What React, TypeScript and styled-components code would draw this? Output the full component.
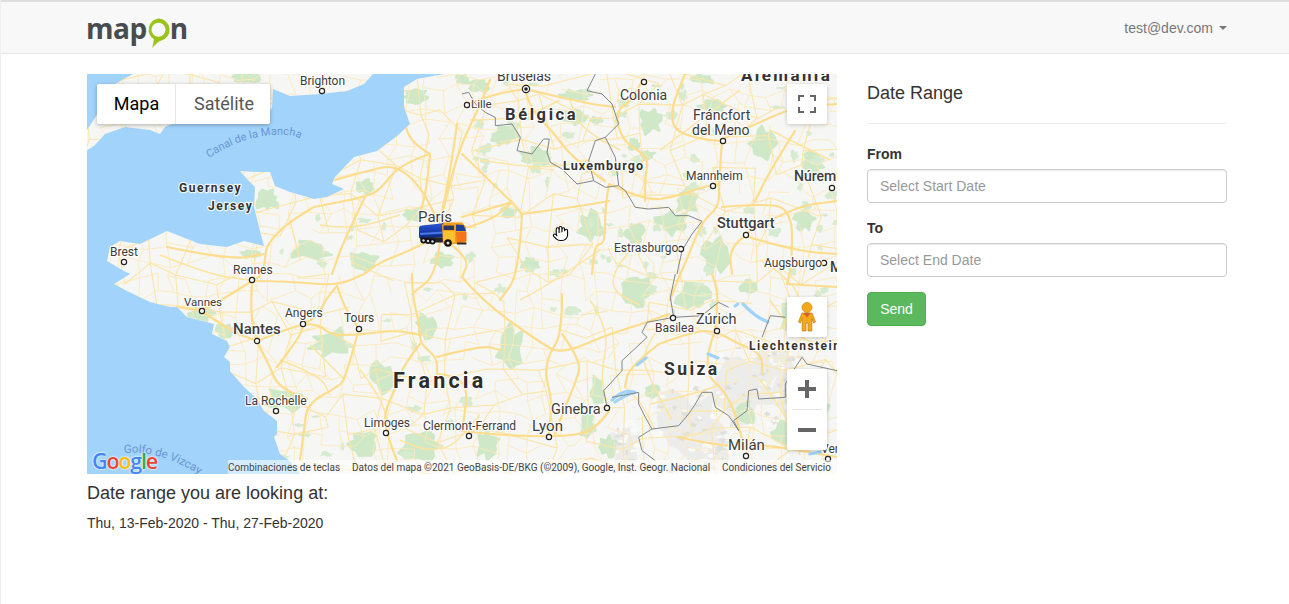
import React, { useMemo } from "react";
import styled, { createGlobalStyle } from "styled-components";
import { Hand } from "lucide-react";

type Pt = [number, number];

const GlobalStyle = createGlobalStyle`
  html, body { margin: 0; padding: 0; background: #fff; }
  body { font-family: "Liberation Sans", Arial, sans-serif; font-size: 14px; line-height: 20px; color: #333; }
  * { box-sizing: border-box; }
`;

const Page = styled.div`
  min-height: 604px;
  border-left: 1px solid #eeeeee;
`;
const Navbar = styled.header`
  height: 54px;
  background: #f8f8f8;
  border-top: 2px solid #dedede;
  border-bottom: 1px solid #e7e7e7;
  display: flex;
  align-items: center;
  justify-content: space-between;
  padding: 0 62px 0 85px;
`;
const Logo = styled.div`
  display: flex;
  align-items: flex-start;
  height: 36px;
  font-family: "Open Sans", sans-serif;
  font-weight: 700;
  font-size: 28px;
  line-height: 36px;
  letter-spacing: -0.5px;
  color: #484c4f;
`;
const LogoMark = styled.svg`
  width: 25px;
  height: 36px;
  margin: 5px -1px 0 -1px;
  flex: none;
`;
const UserMenu = styled.div`
  display: flex;
  align-items: center;
  gap: 5px;
  color: #777;
  font-size: 14px;
`;
const Caret = styled.span`
  width: 0;
  height: 0;
  border-top: 4px solid #777;
  border-left: 4px solid transparent;
  border-right: 4px solid transparent;
  margin-left: 1px;
`;
const Main = styled.main`
  display: grid;
  grid-template-columns: 750px 360px;
  column-gap: 30px;
  padding: 20px 62px 0 86px;
`;
const MapFrame = styled.div`
  position: relative;
  width: 750px;
  height: 400px;
  overflow: hidden;
  background: #a2d4fb;
`;
const MapDrawing = styled.svg`
  display: block;
  width: 750px;
  height: 400px;
  font-family: Roboto, sans-serif;
`;
const Label = styled.text<{ $weight?: number; $spacing?: number; $color?: string; $halo?: boolean }>`
  font-weight: ${(p) => p.$weight ?? 400};
  letter-spacing: ${(p) => p.$spacing ?? 0}px;
  fill: ${(p) => p.$color ?? "#3c3c3c"};
  stroke: ${(p) => (p.$halo === false ? "none" : "rgba(255,255,255,.85)")};
  stroke-width: 2.4px;
  paint-order: stroke;
  stroke-linejoin: round;
`;
const MapTypeBar = styled.div`
  position: absolute;
  left: 10px;
  top: 10px;
  display: flex;
  height: 40px;
  background: #fff;
  box-shadow: 0 1px 4px rgba(0, 0, 0, 0.3);
  border-radius: 2px;
  font-family: Roboto, sans-serif;
  font-size: 18px;
`;
const MapTypeButton = styled.div<{ $active?: boolean; $w: number }>`
  width: ${(p) => p.$w}px;
  padding-left: ${(p) => (p.$active ? 1 : 2)}px;
  display: flex;
  align-items: center;
  justify-content: center;
  color: ${(p) => (p.$active ? "#000" : "#565656")};
  border-right: ${(p) => (p.$active ? "1px solid #e6e6e6" : "none")};
`;
const ControlBox = styled.div<{ $top: number; $h?: number }>`
  position: absolute;
  left: 700px;
  top: ${(p) => p.$top}px;
  width: 40px;
  height: ${(p) => p.$h ?? 40}px;
  background: #fff;
  border-radius: 2px;
  box-shadow: 0 1px 4px rgba(0, 0, 0, 0.2);
  display: flex;
  flex-direction: column;
  align-items: center;
  justify-content: center;
`;
const ZoomButton = styled.div`
  height: 40px;
  width: 40px;
  display: flex;
  align-items: center;
  justify-content: center;
`;
const ZoomDivider = styled.div`
  height: 1px;
  width: 30px;
  background: #e6e6e6;
`;
const Attribution = styled.div`
  position: absolute;
  right: 0;
  bottom: 0;
  left: 141px;
  height: 14px;
  padding-top: 2px;
  background: rgba(255, 255, 255, 0.55);
  font-family: Roboto, sans-serif;
  font-size: 10px;
  line-height: 12px;
  color: #444;
  white-space: nowrap;
  display: flex;
`;
const AttrItem = styled.span<{ $w: number }>`
  display: block;
  width: ${(p) => p.$w}px;
`;
const GoogleMark = styled.div`
  position: absolute;
  left: 5px;
  bottom: 0;
  height: 26px;
  font-family: "Open Sans", sans-serif;
  font-size: 21.5px;
  line-height: 26px;
  font-weight: 600;
  letter-spacing: -1.2px;
  text-shadow: 0 0 2px rgba(255, 255, 255, 0.95), 0 0 2px rgba(255, 255, 255, 0.95);
`;
const GoogleLetter = styled.span<{ $c: string }>`
  color: ${(p) => p.$c};
`;
const TruckMarker = styled.svg`
  position: absolute;
  left: 332px;
  top: 148px;
  width: 48px;
  height: 25px;
`;
const CursorHand = styled(Hand)`
  position: absolute;
  left: 465px;
  top: 151px;
  width: 17px;
  height: 17px;
  fill: #fff;
  color: #000;
`;
const Side = styled.aside`
  padding-top: 9px;
`;
const SideTitle = styled.h2`
  margin: 0 0 20px;
  padding-bottom: 20px;
  border-bottom: 1px solid #eee;
  font-size: 18px;
  font-weight: 400;
  line-height: 20px;
  color: #333;
`;
const Field = styled.div`
  margin-bottom: 15px;
`;
const FieldLabel = styled.label`
  display: block;
  margin-bottom: 5px;
  font-weight: 700;
  font-size: 14px;
  line-height: 20px;
`;
const TextInput = styled.input`
  display: block;
  width: 100%;
  height: 34px;
  padding: 6px 12px;
  border: 1px solid #ccc;
  border-radius: 4px;
  font: 14px/20px "Liberation Sans", Arial, sans-serif;
  color: #555;
  background: #fff;
  box-shadow: inset 0 1px 1px rgba(0, 0, 0, 0.075);
  &::placeholder { color: #999; opacity: 1; }
`;
const SendButton = styled.button`
  display: block;
  width: 59px;
  height: 34px;
  padding: 0;
  border: 1px solid #4cae4c;
  border-radius: 4px;
  background: #5cb85c;
  color: #fff;
  font: 14px/20px "Liberation Sans", Arial, sans-serif;
`;
const Summary = styled.section`
  grid-column: 1;
  grid-row: 2;
  padding-top: 9px;
`;
const SummaryTitle = styled.h3`
  margin: 0 0 10px;
  font-size: 18px;
  font-weight: 400;
  line-height: 20px;
  color: #333;
`;
const SummaryText = styled.p`
  margin: 0;
  font-size: 14px;
  line-height: 20px;
  color: #333;
`;

/* ------- map data (page coordinates: svg viewBox starts at 87,74) ------- */
const UK: Pt[] = [[133,74],[373,74],[364,84],[347,91],[320,94],[290,96],[273,89],[272,108],[262,118],[185,118],[165,127],[160,134],[150,130],[125,127],[105,134],[94,146],[87,150],[87,130],[100,110],[115,84]];
const FRANCE: Pt[] = [[444,74],[417,79],[404,87],[404,107],[410,124],[397,136],[377,151],[354,157],[335,177],[332,184],[344,189],[327,197],[314,199],[290,192],[275,186],[270,172],[257,172],[240,171],[247,179],[255,187],[254,207],[260,231],[264,246],[244,241],[227,247],[200,244],[167,231],[140,244],[120,241],[110,247],[107,261],[124,271],[130,274],[114,284],[127,291],[150,302],[170,307],[177,307],[187,317],[214,324],[212,334],[227,341],[230,347],[224,357],[230,362],[230,371],[244,387],[257,399],[264,411],[277,421],[277,434],[274,437],[280,454],[290,461],[300,474],[837,474],[837,74]];

const MAJOR: Pt[][] = [
  [[440,225],[450,180],[463,140],[478,110],[490,80]],
  [[335,180],[370,170],[395,165],[420,185],[440,225]],
  [[314,207],[267,234],[264,274],[252,281]],
  [[252,281],[287,281],[337,286],[364,274]],
  [[257,341],[285,330],[303,324],[320,325],[330,335],[359,335],[395,330],[420,335]],
  [[337,286],[327,297],[317,317],[303,324]],
  [[337,286],[344,307],[359,329]],
  [[359,329],[354,347],[344,381],[337,387],[307,404],[304,431],[300,460]],
  [[257,341],[270,367],[277,384],[294,394],[307,399]],
  [[277,367],[300,337],[303,324]],
  [[412,274],[412,294],[420,327],[420,344],[437,357],[437,374]],
  [[420,344],[404,364],[394,391],[384,414],[387,434],[397,461]],
  [[562,294],[562,334],[549,354],[545,374],[552,400],[549,434]],
  [[462,277],[482,301],[542,344],[562,354],[609,334],[642,324],[669,314]],
  [[562,334],[582,361],[575,384],[565,407],[555,434]],
  [[609,411],[595,431],[562,437],[500,435],[462,431]],
  [[659,344],[629,367],[625,387]],
  [[659,344],[695,331],[715,331],[739,344],[762,354],[762,374]],
  [[712,274],[719,290],[715,331]],
  [[678,437],[722,447],[762,444],[837,457]],
  [[787,284],[837,287]],
  [[722,141],[719,184],[719,207],[702,221],[685,264],[680,274],[670,300]],
  [[609,184],[605,207],[605,244],[595,244],[592,274]],
  [[522,214],[575,207],[609,201]],
  [[522,214],[519,274],[500,300]],
  [[462,154],[512,202],[522,214]],
  [[462,217],[512,202]],
  [[609,184],[645,201],[675,197],[702,187],[719,184]],
  [[642,81],[632,101],[615,111],[622,141],[649,157],[645,177],[645,201]],
  [[525,89],[529,107],[552,131],[572,157],[605,181]],
  [[525,89],[589,104],[615,107]],
  [[467,104],[495,94],[525,89]],
  [[719,141],[762,121],[795,107],[837,104]],
  [[719,141],[679,137],[669,114],[685,74]],
  [[745,234],[792,207],[837,201]],
  [[722,207],[755,204],[792,207],[792,264],[787,284]],
  [[745,236],[795,251],[837,254]],
  [[745,236],[729,247],[732,274]],
  [[795,131],[772,167],[755,201]],
  [[430,154],[427,187],[420,214]],
  [[430,154],[407,141],[404,107]],
  [[430,154],[400,164],[380,190],[365,197],[314,207]],
  [[365,197],[344,240],[332,274]],
  [[457,124],[450,174],[440,220]],
  [[440,235],[412,250],[380,262],[364,274]],
  [[445,240],[470,258],[462,277]],
  [[450,232],[490,222],[512,202]],
  [[440,240],[437,274],[412,294]],
  [[167,247],[230,260],[264,254]],
  [[252,281],[250,314],[257,341]],
  [[252,281],[220,301],[202,311],[177,307]],
  [[202,311],[230,331],[257,341]],
  [[715,331],[700,370],[730,395],[745,450]],
  [[437,374],[470,375],[462,431]],
  [[437,357],[482,345],[500,350]],
];
const SECONDARY: Pt[][] = [
  [[640,240],[618,262],[610,290],[640,305]],
  [[590,300],[610,330],[600,375],[609,411]],
  [[669,314],[640,350],[650,380],[672,420]],
  [[650,404],[690,395],[720,385]],
  [[625,387],[640,400],[655,430]],
  [[470,120],[520,120],[560,100]],
  [[620,150],[580,130],[570,100]],
  [[480,160],[540,170],[590,160]],
  [[660,150],[700,120],[740,90]],
  [[770,130],[830,160]],
  [[760,260],[810,290],[780,330]],
  [[400,440],[440,460],[480,415]],
  [[520,300],[540,290],[600,250]],
  [[320,225],[350,230],[400,215]],
  [[290,220],[300,260]],
  [[160,255],[210,275],[250,280]],
  [[310,345],[345,380]],
  [[280,360],[320,375],[330,395]],
  [[360,370],[380,395],[390,430]],
  [[770,300],[800,345],[835,340]],
  [[760,380],[790,420],[800,455]],
];
const GREEN: number[][] = [
  [404,90,428,104],[255,190,280,210],[357,178,374,194],[287,241,330,260],[347,250,377,274],[404,208,424,222],[430,253,453,267],
  [500,207,517,217],[520,257,540,272],[577,211,605,241],[490,127,517,147],[522,147,555,167],[655,211,689,234],[625,224,645,244],
  [675,187,699,214],[702,234,729,274],[749,127,775,160],[692,74,715,84],[590,117,602,124],[629,137,639,151],[639,107,662,134],
  [795,207,815,230],[215,324,237,337],[310,327,354,357],[370,362,394,394],[264,386,304,411],[350,431,380,457],[400,431,440,461],
  [415,314,435,341],[190,307,214,321],[495,324,527,371],[475,431,499,459],[579,414,595,437],[675,284,712,311],[622,274,652,307],
  [589,377,605,407],[645,384,659,397],[599,437,619,457],[560,108,590,125],[470,80,490,92],[560,90,590,100],[800,150,825,175],
  [780,300,800,330],[770,420,800,445],[735,400,755,425],[810,395,830,430],[640,150,655,160],[700,100,725,112],[240,250,262,258],
  [740,280,760,296],[380,80,400,90],[230,74,265,82],[455,74,470,84],
];
const ALPS: number[][] = [[650,385,720,470],[715,345,785,425],[770,350,800,420],[700,430,730,470],[610,420,640,470]];
const BORDERS: { o: Pt; pts: number[] }[] = [
  { o: [462,74], pts: [0,60,20,55,40,90,70,115,100,130,100,155,150,150,175,190,165,230,210,240,245,195,262,195,255,235,265,265,300,285,345,330,395,320,430,340,470,335,490,350,520,400,560,405,620,400,640,425,680,425,720,442,690,480,660,530,645,600] },
  { o: [462,74], pts: [395,320,380,260,400,200,430,190,470,150,450,90,420,60,375,50,400,0] },
  { o: [462,74], pts: [430,190,460,250,470,335] },
  { o: [462,274], pts: [640,0,625,70,635,130,555,145,540,175,555,190,480,260,480,290,425,350,435,400] },
  { o: [462,274], pts: [450,370,530,355,530,390,550,430,570,465,650,455,680,420,700,390,720,355,750,355,760,400,800,425,830,470,815,440,855,410,860,350,885,345,890,375,970,370,970,330,1000,280,1020,250,1035,270,1125,290] },
  { o: [462,274], pts: [635,130,720,125,750,100,770,85,800,100] },
  { o: [462,274], pts: [900,190,925,125,970,130] },
  { o: [462,274], pts: [570,465,530,490,540,530,580,560] },
];
const LAKES: Pt[][] = [
  [[612,400],[622,391],[638,392],[628,394],[615,402]],
  [[637,365],[646,358]],
  [[743,304],[755,316],[768,322]],
  [[708,354],[718,358]],
  [[810,454],[820,452]],
  [[735,306],[738,304]],
];
const DOTS: Pt[] = [[322,91],[644,82],[467,105],[723,141],[713,186],[832,188],[746,235],[681,249],[824,263],[124,262],[252,280],[202,311],[257,341],[303,324],[359,329],[276,411],[386,433],[469,436],[549,437],[607,408],[673,318],[717,331],[746,456],[828,459]];

type L = { t: string; x: number; y: number; s: number; w?: number; sp?: number; c?: string };
const LABELS: L[] = [
  { t: "Bruselas", x: 497, y: 81, s: 14 },
  { t: "Brighton", x: 300, y: 85, s: 12 },
  { t: "Alemania", x: 741, y: 81, s: 17, w: 700, sp: 2.4, c: "#333" },
  { t: "Colonia", x: 620, y: 100, s: 14 },
  { t: "Lille", x: 471, y: 108, s: 11.5 },
  { t: "Bélgica", x: 505, y: 120, s: 16.5, w: 700, sp: 2.6, c: "#333" },
  { t: "Fráncfort", x: 693, y: 120, s: 14 },
  { t: "del Meno", x: 692, y: 135, s: 14 },
  { t: "Luxemburgo", x: 563, y: 170, s: 12.5, w: 700, sp: 1.1, c: "#333" },
  { t: "Mannheim", x: 686, y: 180, s: 12 },
  { t: "Núremberg", x: 794, y: 181, s: 14, w: 500 },
  { t: "Stuttgart", x: 717, y: 228, s: 14.5, w: 500 },
  { t: "Estrasburgo", x: 614, y: 252, s: 12 },
  { t: "Augsburgo", x: 764, y: 267, s: 12 },
  { t: "Múnich", x: 830, y: 272, s: 14, w: 500 },
  { t: "Guernsey", x: 179, y: 192, s: 12, w: 700, sp: 1.5, c: "#333" },
  { t: "Jersey", x: 208, y: 210, s: 12, w: 700, sp: 1.5, c: "#333" },
  { t: "Brest", x: 110, y: 256, s: 12 },
  { t: "París", x: 418, y: 222, s: 15 },
  { t: "Rennes", x: 233, y: 274, s: 12 },
  { t: "Vannes", x: 184, y: 306, s: 11.5 },
  { t: "Angers", x: 285, y: 317, s: 12 },
  { t: "Nantes", x: 233, y: 334, s: 15, w: 500 },
  { t: "Tours", x: 344, y: 322, s: 12 },
  { t: "La Rochelle", x: 245, y: 405, s: 12 },
  { t: "Limoges", x: 364, y: 427, s: 12 },
  { t: "Clermont-Ferrand", x: 423, y: 430, s: 12 },
  { t: "Francia", x: 393, y: 388, s: 21.5, w: 700, sp: 3.2, c: "#2b2b2b" },
  { t: "Ginebra", x: 551, y: 414, s: 14.5 },
  { t: "Lyon", x: 532, y: 431, s: 15 },
  { t: "Milán", x: 728, y: 450, s: 15 },
  { t: "Suiza", x: 664, y: 375, s: 17.5, w: 700, sp: 2.4, c: "#333" },
  { t: "Basilea", x: 655, y: 332, s: 12 },
  { t: "Zúrich", x: 696, y: 324, s: 14.5 },
  { t: "Liechtenstein", x: 749, y: 350, s: 12, w: 700, sp: 1.5, c: "#333" },
  { t: "Verona", x: 821, y: 453, s: 12 },
];

function rng(seed: number) {
  return () => {
    seed = (seed + 0x6d2b79f5) | 0;
    let t = Math.imul(seed ^ (seed >>> 15), 1 | seed);
    t = (t + Math.imul(t ^ (t >>> 7), 61 | t)) ^ t;
    return ((t ^ (t >>> 14)) >>> 0) / 4294967296;
  };
}
const poly = (p: Pt[]) => p.map((q) => q.join(",")).join(" ");
function smooth(p: Pt[]) {
  let d = `M${p[0][0]} ${p[0][1]}`;
  for (let i = 1; i < p.length - 1; i++) {
    const mx = (p[i][0] + p[i + 1][0]) / 2;
    const my = (p[i][1] + p[i + 1][1]) / 2;
    d += `Q${p[i][0]} ${p[i][1]} ${mx} ${my}`;
  }
  const l = p[p.length - 1];
  return d + `L${l[0]} ${l[1]}`;
}
function blob(b: number[], r: () => number) {
  const cx = (b[0] + b[2]) / 2, cy = (b[1] + b[3]) / 2;
  const rx = (b[2] - b[0]) / 2, ry = (b[3] - b[1]) / 2;
  const pts: Pt[] = [];
  const n = 16;
  for (let i = 0; i < n; i++) {
    const a = (i / n) * Math.PI * 2;
    const k = 0.5 + r() * 0.7;
    pts.push([+(cx + Math.cos(a) * rx * k).toFixed(1), +(cy + Math.sin(a) * ry * k).toFixed(1)]);
  }
  return poly(pts);
}
function mesh(seed: number, step: number) {
  const r = rng(seed);
  const nodes: Pt[][] = [];
  for (let j = 0; j * step < 420; j++) {
    const row: Pt[] = [];
    for (let i = 0; i * step < 770; i++) {
      row.push([87 + i * step + (r() - 0.5) * step * 0.8, 74 + j * step + (r() - 0.5) * step * 0.8]);
    }
    nodes.push(row);
  }
  let d = "";
  const seg = (a: Pt, b: Pt) => {
    d += `M${a[0].toFixed(1)} ${a[1].toFixed(1)}L${b[0].toFixed(1)} ${b[1].toFixed(1)}`;
  };
  nodes.forEach((row, j) =>
    row.forEach((n, i) => {
      if (row[i + 1] && r() < 0.72) seg(n, row[i + 1]);
      if (nodes[j + 1] && r() < 0.66) seg(n, nodes[j + 1][i]);
    })
  );
  return d;
}

function MapArt() {
  const art = useMemo(() => {
    const r = rng(42);
    const specks = Array.from({ length: 110 }, (_, i) => {
      const east = i < 85;
      const x = east ? 460 + r() * 377 : 250 + r() * 210;
      const y = east ? 74 + r() * 240 : 180 + r() * 290;
      return blob([x, y, x + 4 + r() * 12, y + 3 + r() * 10], r);
    });
    return {
      greens: GREEN.map((b) => blob(b, r)),
      specks,
      alps: ALPS.map((b) => blob(b, r)),
      rocks: Array.from({ length: 150 }, () => {
        const b = ALPS[Math.floor(r() * ALPS.length)];
        const x = b[0] + r() * (b[2] - b[0]);
        const y = b[1] + r() * (b[3] - b[1]);
        return blob([x, y, x + 3 + r() * 7, y + 2 + r() * 4], r);
      }),
      minor: mesh(7, 17),
      minor2: mesh(19, 33),
    };
  }, []);
  return (
    <MapDrawing viewBox="87 74 750 400">
      <defs>
        <clipPath id="land">
          <polygon points={poly(UK)} />
          <polygon points={poly(FRANCE)} />
        </clipPath>
        <path id="canal" d="M209 158Q236 140 264 136T302 140" fill="none" />
        <path id="golfo" d="M124 453Q160 450 198 474" fill="none" />
      </defs>
      <rect x="87" y="74" width="750" height="400" fill="#a2d4fb" />
      <polygon points={poly(UK)} fill="#f6f6f4" />
      <polygon points={poly(FRANCE)} fill="#f6f6f4" />
      <g clipPath="url(#land)">
        {art.alps.map((p, i) => <polygon key={i} points={p} fill="#ecedea" />)}
        {art.greens.map((p, i) => <polygon key={i} points={p} fill="#cfe8c7" strokeLinejoin="round" stroke="#cfe8c7" strokeWidth="2" />)}
        {art.specks.map((p, i) => <polygon key={i} points={p} fill="#d6ebcf" />)}
        {art.rocks.map((p, i) => <polygon key={i} points={p} fill={i % 2 ? "#dfdfdc" : "#fafaf8"} />)}
        <path d={art.minor} fill="none" stroke="#fceabc" strokeWidth="0.9" />
        <path d={art.minor2} fill="none" stroke="#fce5a8" strokeWidth="1.1" />
        {SECONDARY.map((p, i) => <path key={i} d={smooth(p)} fill="none" stroke="#fde49f" strokeWidth="1.4" />)}
        {MAJOR.map((p, i) => <path key={i} d={smooth(p)} fill="none" stroke="#fddd8c" strokeWidth="2.2" strokeLinecap="round" />)}
      </g>
      {LAKES.map((p, i) => <path key={i} d={smooth(p)} fill="none" stroke="#a2d4fb" strokeWidth="3.2" strokeLinecap="round" />)}
      {BORDERS.map((b, i) => {
        const pts: Pt[] = [];
        for (let k = 0; k < b.pts.length; k += 2) pts.push([b.o[0] + b.pts[k] / 3, b.o[1] + b.pts[k + 1] / 3]);
        return <polyline key={i} points={poly(pts)} fill="none" stroke="#80868a" strokeWidth="1" strokeLinejoin="round" />;
      })}
      <Label fontSize="11" $color="#6a94d4" $halo={false}>
        <textPath href="#canal">Canal de la Mancha</textPath>
      </Label>
      <Label fontSize="11.5" $color="#6a94d4" $halo={false}>
        <textPath href="#golfo">Golfo de Vizcaya</textPath>
      </Label>
      {DOTS.map(([x, y], i) => (
        <circle key={i} cx={x} cy={y} r="2.6" fill="#fff" stroke="#222" strokeWidth="1.2" />
      ))}
      <circle cx="526" cy="89" r="3.6" fill="#fff" stroke="#222" strokeWidth="1.2" />
      <circle cx="526" cy="89" r="1.8" fill="#222" />
      {LABELS.map((l) => (
        <Label key={l.t} x={l.x} y={l.y} fontSize={l.s} $weight={l.w} $spacing={l.sp} $color={l.c}>
          {l.t}
        </Label>
      ))}
    </MapDrawing>
  );
}

const Truck = () => (
  <TruckMarker viewBox="0 0 48 25">
    <defs>
      <linearGradient id="tank" x1="0" y1="0" x2="0" y2="1">
        <stop offset="0" stopColor="#2f5ad0" />
        <stop offset="0.5" stopColor="#1b3fb4" />
        <stop offset="1" stopColor="#0c2776" />
      </linearGradient>
    </defs>
    <path d="M0 6Q0 4 3 3.6L22 1.4L25 .6V15.5L1 16.5Q0 16 0 14Z" fill="url(#tank)" />
    <path d="M1 11L25 9.5V11.5L1 13Z" fill="#4a78e6" />
    <path d="M1 15.5H26V20.5H2Z" fill="#262626" />
    <path d="M23 3L25 .5H43L47 5V20L44 22H24Z" fill="#f79c1a" />
    <path d="M24.5 3.5H35V8H24.5Z" fill="#2b3a5c" />
    <path d="M37 2.5L44.5 3L47 9H37Z" fill="#1f3f9c" />
    <path d="M24 9H36V20.5H30L24 19Z" fill="#fac22e" />
    <path d="M37 10H47.5V19L38 21.5Z" fill="#f4761b" />
    <path d="M38 20.5H47.5V22.5H38Z" fill="#2e2e2e" />
    {[[4.5,18.5,3],[9,19,3],[13.5,19.5,3],[29,21,3.8]].map(([x, y, r], i) => (
      <g key={i}>
        <circle cx={x} cy={y} r={r} fill="#111" />
        <circle cx={x} cy={y} r={r * 0.4} fill="#ddd" />
      </g>
    ))}
  </TruckMarker>
);

export default function App() {
  return (
    <Page>
      <GlobalStyle />
      <Navbar>
        <Logo>
          <span>map</span>
          <LogoMark viewBox="0 0 25 36">
            <path
              d="M12.5 3.5a11.3 11.3 0 0 1 2.4 22.3c-2.4.6-5.4 3.4-8.6 7.3l1.6-8.9A11.3 11.3 0 0 1 12.5 3.5Zm0 4.3a7 7 0 1 0 0 14 7 7 0 0 0 0-14Z"
              fill="#9bc31c"
              fillRule="evenodd"
            />
          </LogoMark>
          <span>n</span>
        </Logo>
        <UserMenu>
          test@dev.com <Caret />
        </UserMenu>
      </Navbar>
      <Main>
        <MapFrame>
          <MapArt />
          <MapTypeBar>
            <MapTypeButton $active $w={79}>Mapa</MapTypeButton>
            <MapTypeButton $w={94}>Satélite</MapTypeButton>
          </MapTypeBar>
          <ControlBox $top={10}>
            <svg width="18" height="18" viewBox="0 0 18 18" fill="none" stroke="#666" strokeWidth="2">
              <path d="M1 6V1H6M12 1H17V6M17 12V17H12M6 17H1V12" />
            </svg>
          </ControlBox>
          <ControlBox $top={223}>
            <svg width="20" height="30" viewBox="0 0 20 30">
              <circle cx="10" cy="5.5" r="5" fill="#f5a81c" stroke="#c98a12" strokeWidth="0.7" />
              <path d="M5 11H15L18.5 20L16.6 21L14.8 16.5V29H11V21H9V29H5.2V16.5L3.4 21L1.5 20Z" fill="#f5a81c" stroke="#b67c10" strokeWidth="0.7" />
              <path d="M6.5 11H13.5L10 15.5Z" fill="#dd5a2a" />
            </svg>
          </ControlBox>
          <ControlBox $top={295} $h={81}>
            <ZoomButton>
              <svg width="18" height="18" viewBox="0 0 18 18" fill="#666">
                <path d="M7 0H11V7H18V11H11V18H7V11H0V7H7Z" />
              </svg>
            </ZoomButton>
            <ZoomDivider />
            <ZoomButton>
              <svg width="18" height="18" viewBox="0 0 18 18" fill="#666">
                <path d="M0 7H18V11H0Z" />
              </svg>
            </ZoomButton>
          </ControlBox>
          <Attribution>
            <AttrItem $w={124}>Combinaciones de teclas</AttrItem>
            <AttrItem $w={370}>Datos del mapa ©2021 GeoBasis-DE/BKG (©2009), Google, Inst. Geogr. Nacional</AttrItem>
            <AttrItem $w={110}>Condiciones del Servicio</AttrItem>
          </Attribution>
          <GoogleMark>
            <GoogleLetter $c="#4285f4">G</GoogleLetter>
            <GoogleLetter $c="#ea4335">o</GoogleLetter>
            <GoogleLetter $c="#fbbc05">o</GoogleLetter>
            <GoogleLetter $c="#4285f4">g</GoogleLetter>
            <GoogleLetter $c="#34a853">l</GoogleLetter>
            <GoogleLetter $c="#ea4335">e</GoogleLetter>
          </GoogleMark>
          <Truck />
          <CursorHand strokeWidth={1.5} />
        </MapFrame>
        <Side>
          <SideTitle>Date Range</SideTitle>
          <Field>
            <FieldLabel>From</FieldLabel>
            <TextInput placeholder="Select Start Date" readOnly />
          </Field>
          <Field>
            <FieldLabel>To</FieldLabel>
            <TextInput placeholder="Select End Date" readOnly />
          </Field>
          <SendButton>Send</SendButton>
        </Side>
        <Summary>
          <SummaryTitle>Date range you are looking at:</SummaryTitle>
          <SummaryText>Thu, 13-Feb-2020 - Thu, 27-Feb-2020</SummaryText>
        </Summary>
      </Main>
    </Page>
  );
}
